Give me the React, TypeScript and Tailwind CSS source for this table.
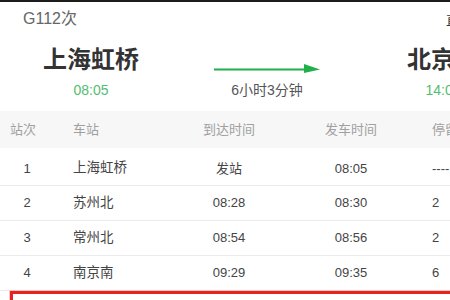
const font = { fontFamily: '"Liberation Sans", "Noto Sans CJK SC", sans-serif' };

const stops = [
  { no: "1", name: "上海虹桥", arrive: "发站", depart: "08:05", stay: "----" },
  { no: "2", name: "苏州北", arrive: "08:28", depart: "08:30", stay: "2" },
  { no: "3", name: "常州北", arrive: "08:54", depart: "08:56", stay: "2" },
  { no: "4", name: "南京南", arrive: "09:29", depart: "09:35", stay: "6" },
];

const Arrow = () => (
  <svg width="106" height="10" viewBox="0 0 106 10">
    <line x1="0" y1="5.5" x2="96" y2="5.5" stroke="#1fb04a" strokeWidth="2" />
    <polygon points="90,0 106,5.5 90,9" fill="#1fb04a" />
  </svg>
);

export default function App() {
  return (
    <div className="w-[450px] h-[300px] overflow-hidden bg-white flex flex-col" style={font}>
      <div className="h-[2px] bg-[#1c1c1c] shrink-0" />

      <div className="h-[43px] flex pl-[23px] pt-[7px] shrink-0">
        <span className="w-[423px] shrink-0 text-[16px] leading-[20px] text-[#666]">G112次</span>
        <span className="shrink-0 text-[13px] leading-[20px] text-[#333] pt-[2px]">直达</span>
      </div>

      <div className="h-[66px] flex pl-[3px] shrink-0">
        <div className="w-[176px] shrink-0 flex flex-col items-center">
          <div className="text-[24px] leading-[30px] font-bold text-[#333]">上海虹桥</div>
          <div className="mt-[6px] text-[14px] leading-[18px] text-[#52bd72]">08:05</div>
        </div>
        <div className="w-[176px] shrink-0 flex flex-col items-center pt-[19px]">
          <Arrow />
          <div className="mt-[7px] text-[14px] leading-[18px] text-[#555]">6小时3分钟</div>
        </div>
        <div className="w-[176px] shrink-0 flex flex-col items-center">
          <div className="whitespace-nowrap text-[24px] leading-[30px] font-bold text-[#333]">北京南</div>
          <div className="mt-[6px] text-[14px] leading-[18px] text-[#52bd72]">14:08</div>
        </div>
      </div>

      <div className="flex h-[37px] items-center bg-[#f7f7f7] text-[13px] text-[#a0a0a0] shrink-0">
        <div className="w-[50px] shrink-0 pl-[10px]">站次</div>
        <div className="w-[121px] shrink-0 pl-[23px]">车站</div>
        <div className="w-[116px] shrink-0 text-center">到达时间</div>
        <div className="w-[128px] shrink-0 text-center">发车时间</div>
        <div className="pl-[17px] whitespace-nowrap">停留时间</div>
      </div>

      {stops.map((s, i) => (
        <div
          key={s.no}
          className={
            i === 0
              ? "flex h-[38px] pt-[4px] items-center border-b border-[#ebebeb] text-[13px] text-[#444] shrink-0"
              : "flex h-[35px] items-center border-b border-[#ebebeb] text-[13px] text-[#444] shrink-0"
          }
        >
          <div className="w-[54px] shrink-0 text-center">{s.no}</div>
          <div className="w-[117px] shrink-0 pl-[19px] text-[13.5px]">{s.name}</div>
          <div className="w-[116px] shrink-0 text-center">{s.arrive}</div>
          <div className="w-[128px] shrink-0 text-center">{s.depart}</div>
          <div className="pl-[17px]">{s.stay}</div>
        </div>
      ))}

      <div className="ml-[10px] w-[460px] h-[40px] shrink-0 border-[3px] border-[#e8231d] shadow-[0_0_0_1px_#f7c4c2]" />
    </div>
  );
}
